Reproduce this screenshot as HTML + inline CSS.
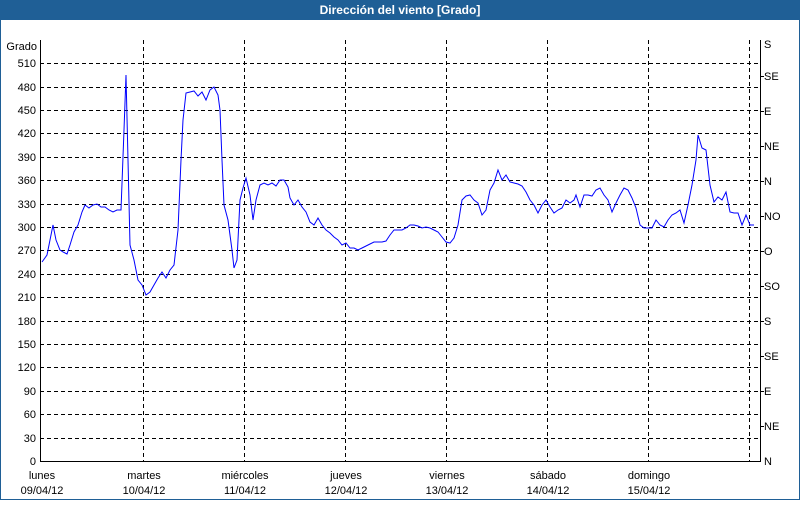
<!DOCTYPE html>
<html><head><meta charset="utf-8"><style>
html,body{margin:0;padding:0;background:#fff;}
body{width:800px;height:500px;overflow:hidden;font-family:"Liberation Sans","DejaVu Sans",sans-serif;}
</style></head><body>
<svg width="800" height="500" xmlns="http://www.w3.org/2000/svg" font-family="Liberation Sans, DejaVu Sans, sans-serif" font-size="11">
<rect x="0" y="0" width="800" height="500" fill="#fff"/>
<rect x="0.5" y="0.5" width="799" height="499" fill="none" stroke="#1f5f96" stroke-width="1"/>
<rect x="0" y="0" width="800" height="20" fill="#1f5f96"/>
<text x="400" y="14" fill="#fff" font-weight="bold" font-size="12" text-anchor="middle">Dirección del viento [Grado]</text>
<g stroke="#000" stroke-dasharray="4,3" stroke-width="1">
<line x1="40" x2="760" y1="63.5" y2="63.5"/><line x1="40" x2="760" y1="87.5" y2="87.5"/>
<line x1="40" x2="760" y1="110.5" y2="110.5"/><line x1="40" x2="760" y1="133.5" y2="133.5"/>
<line x1="40" x2="760" y1="157.5" y2="157.5"/><line x1="40" x2="760" y1="180.5" y2="180.5"/>
<line x1="40" x2="760" y1="204.5" y2="204.5"/><line x1="40" x2="760" y1="227.5" y2="227.5"/>
<line x1="40" x2="760" y1="250.5" y2="250.5"/><line x1="40" x2="760" y1="274.5" y2="274.5"/>
<line x1="40" x2="760" y1="297.5" y2="297.5"/><line x1="40" x2="760" y1="321.5" y2="321.5"/>
<line x1="40" x2="760" y1="344.5" y2="344.5"/><line x1="40" x2="760" y1="367.5" y2="367.5"/>
<line x1="40" x2="760" y1="391.5" y2="391.5"/><line x1="40" x2="760" y1="414.5" y2="414.5"/>
<line x1="40" x2="760" y1="438.5" y2="438.5"/>
<line x1="143.5" x2="143.5" y1="40" y2="461"/><line x1="244.5" x2="244.5" y1="40" y2="461"/>
<line x1="345.5" x2="345.5" y1="40" y2="461"/><line x1="446.5" x2="446.5" y1="40" y2="461"/>
<line x1="547.5" x2="547.5" y1="40" y2="461"/><line x1="648.5" x2="648.5" y1="40" y2="461"/>
<line x1="749.5" x2="749.5" y1="40" y2="461"/>
</g>
<g stroke="#000" fill="none">
<polyline points="40.5,40 40.5,461.5 760.5,461.5 760.5,40"/>
<line x1="760" x2="764" y1="76.5" y2="76.5"/><line x1="760" x2="764" y1="111.5" y2="111.5"/>
<line x1="760" x2="764" y1="146.5" y2="146.5"/><line x1="760" x2="764" y1="181.5" y2="181.5"/>
<line x1="760" x2="764" y1="216.5" y2="216.5"/><line x1="760" x2="764" y1="251.5" y2="251.5"/>
<line x1="760" x2="764" y1="286.5" y2="286.5"/><line x1="760" x2="764" y1="321.5" y2="321.5"/>
<line x1="760" x2="764" y1="356.5" y2="356.5"/><line x1="760" x2="764" y1="391.5" y2="391.5"/>
<line x1="760" x2="764" y1="426.5" y2="426.5"/>
</g>
<g fill="#000" text-anchor="end">
<text x="37" y="50">Grado</text>
<text x="36" y="67">510</text><text x="36" y="91">480</text><text x="36" y="114">450</text>
<text x="36" y="137">420</text><text x="36" y="161">390</text><text x="36" y="184">360</text>
<text x="36" y="208">330</text><text x="36" y="231">300</text><text x="36" y="254">270</text>
<text x="36" y="278">240</text><text x="36" y="301">210</text><text x="36" y="325">180</text>
<text x="36" y="348">150</text><text x="36" y="371">120</text><text x="36" y="395">90</text>
<text x="36" y="418">60</text><text x="36" y="442">30</text><text x="36" y="465">0</text>
</g>
<g fill="#000">
<text x="764" y="48">S</text><text x="764" y="80">SE</text><text x="764" y="115">E</text>
<text x="764" y="150">NE</text><text x="764" y="185">N</text><text x="764" y="220">NO</text>
<text x="764" y="255">O</text><text x="764" y="290">SO</text><text x="764" y="325">S</text>
<text x="764" y="360">SE</text><text x="764" y="395">E</text><text x="764" y="430">NE</text>
<text x="764" y="465">N</text>
</g>
<g fill="#000" text-anchor="middle">
<text x="42" y="479">lunes</text><text x="42" y="494">09/04/12</text>
<text x="144" y="479">martes</text><text x="144" y="494">10/04/12</text>
<text x="245" y="479">miércoles</text><text x="245" y="494">11/04/12</text>
<text x="346" y="479">jueves</text><text x="346" y="494">12/04/12</text>
<text x="447" y="479">viernes</text><text x="447" y="494">13/04/12</text>
<text x="548" y="479">sábado</text><text x="548" y="494">14/04/12</text>
<text x="649" y="479">domingo</text><text x="649" y="494">15/04/12</text>
</g>
<polyline fill="none" stroke="#0000ff" stroke-width="1" points="42,262 47,255 50,240 53,225 56,240 60,250 63,252 67,254 70,245 74,232 78,225 82,212 85,205 89,208 93,205 97,204 101,207 105,207 109,210 113,212 117,210 121,210 124,130 126,75 128,160 130,245 134,260 138,280 142,285 146,295 150,292 154,285 158,278 162,272 166,278 170,270 174,265 178,230 181,160 183,120 186,93 190,92 194,91 198,96 202,92 206,100 210,90 214,87 218,95 220,110 222,160 224,205 228,220 232,250 234,268 237,260 240,200 243,188 246,178 250,195 253,220 256,200 260,185 264,183 268,185 272,183 276,186 280,180 284,180 288,187 290,198 294,205 298,200 302,207 306,212 310,222 314,225 318,218 322,225 326,230 330,233 334,237 338,240 342,245 346,243 350,248 354,248 358,250 362,248 366,246 370,244 374,242 378,242 382,242 386,241 390,235 394,230 398,230 402,230 406,228 410,225 414,225 418,226 422,228 426,227 430,228 434,230 438,232 442,237 446,242 450,243 454,238 458,225 462,200 466,196 470,195 474,200 478,203 482,215 486,210 490,190 494,183 498,170 502,180 506,175 510,182 514,183 518,184 522,186 526,192 530,200 534,205 538,213 542,205 546,200 550,207 554,213 558,210 562,208 566,200 570,203 574,200 576,195 580,207 584,195 588,195 592,196 596,190 600,188 604,195 608,200 612,212 616,203 620,195 624,188 628,190 632,198 636,208 640,225 644,228 648,228 652,228 656,220 660,225 664,227 668,220 672,215 676,213 680,210 684,223 688,205 692,185 696,160 698,135 702,148 706,150 710,185 714,202 718,197 722,200 726,192 730,212 734,213 738,213 742,225 746,215 750,225 754,225"/>
</svg>
</body></html>
